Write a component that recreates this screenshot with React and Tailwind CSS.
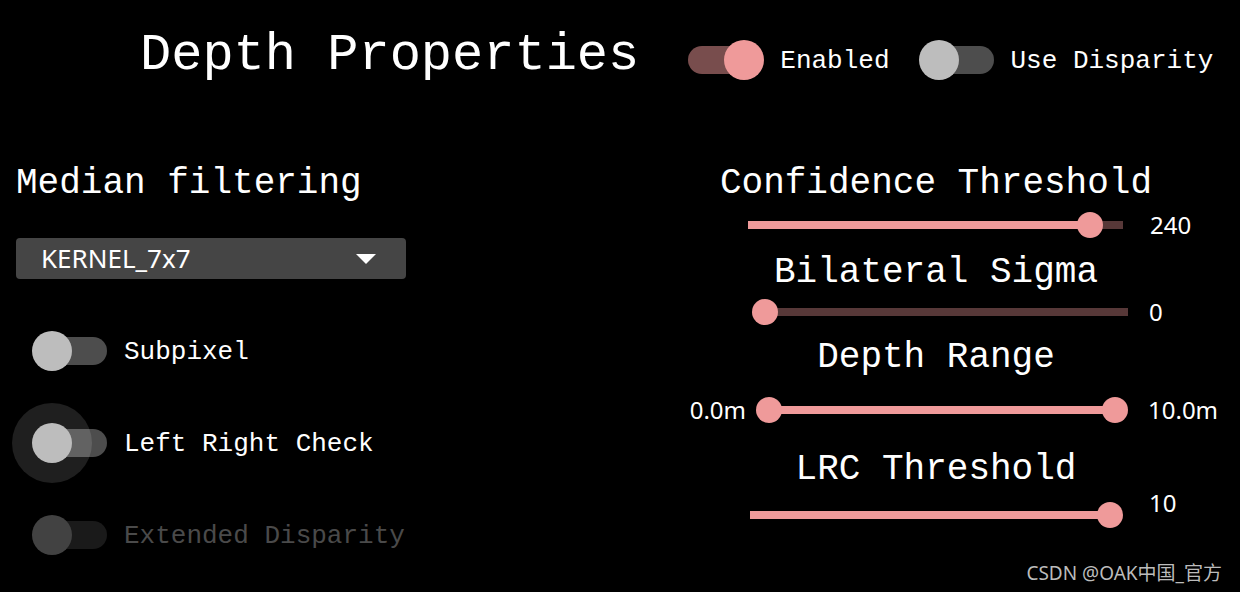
import React from 'react';

const mono = { fontFamily: '"Liberation Mono", "Courier New", monospace' };
const sans = { fontFamily: '"Noto Sans", Roboto, sans-serif' };

function Toggle({ checked = false, disabled = false, focused = false }) {
  let track = 'bg-white/30';
  let thumb = 'bg-[#bdbdbd]';
  if (checked) {
    track = 'bg-[#ef9a9a]/50';
    thumb = 'bg-[#ef9a9a]';
  }
  if (disabled) {
    track = 'bg-white/10';
    thumb = 'bg-[#424242]';
  }
  return (
    <div className="relative h-[40px] w-[76px] shrink-0">
      {focused && (
        <span className="absolute left-[-20px] top-[-20px] h-[80px] w-[80px] rounded-full bg-white/[0.12]" />
      )}
      <span className={`absolute left-[7px] top-[6px] h-[28px] w-[68px] rounded-full ${track}`} />
      <span
        className={`absolute top-0 h-[40px] w-[40px] rounded-full ${thumb} ${checked ? 'left-[43px]' : 'left-0'}`}
      />
    </div>
  );
}

function SwitchLabel({ label, checked, disabled, focused, className = '' }) {
  return (
    <div className={`flex h-[40px] items-center ${className}`}>
      <Toggle checked={checked} disabled={disabled} focused={focused} />
      <span
        className={`h-[40px] text-[26px] leading-[42px] ${checked ? 'ml-[23px]' : 'ml-[16px]'} ${
          disabled ? 'text-[#4a4a4a]' : 'text-white'
        }`}
        style={mono}
      >
        {label}
      </span>
    </div>
  );
}

function Slider({ className, from = 0, to, range = false }) {
  return (
    <div className={`relative h-[26px] shrink-0 ${className}`}>
      <div className="absolute inset-x-0 top-[9px] h-[8px] bg-[#573838]" />
      <div
        className="absolute top-[9px] h-[8px] bg-[#ef9a9a]"
        style={{ left: `${from}%`, width: `${to - from}%` }}
      />
      {range && (
        <span
          className="absolute top-0 ml-[-13px] h-[26px] w-[26px] rounded-full bg-[#ef9a9a]"
          style={{ left: `${from}%` }}
        />
      )}
      <span
        className="absolute top-0 ml-[-13px] h-[26px] w-[26px] rounded-full bg-[#ef9a9a]"
        style={{ left: `${to}%` }}
      />
    </div>
  );
}

function Heading({ children, className = '' }) {
  return (
    <div className={`h-[40px] text-[36px] leading-[47px] text-white whitespace-nowrap ${className}`} style={mono}>
      {children}
    </div>
  );
}

export default function App() {
  return (
    <div className="relative h-[592px] w-[1240px] overflow-hidden bg-black text-white">
      {/* header */}
      <div className="flex items-start pl-[140px] pt-[24px]">
        <h1 className="h-[60px] text-[52px] leading-[63px] whitespace-nowrap" style={mono}>
          Depth Properties
        </h1>
        <div className="ml-[42px] mt-[16px] flex items-center">
          <SwitchLabel label="Enabled" checked />
          <SwitchLabel label="Use Disparity" className="ml-[29px]" />
        </div>
      </div>

      <div className="mt-[76px] flex">
        {/* left column */}
        <div className="w-[680px] pl-[16px]">
          <Heading>Median filtering</Heading>
          <div className="mt-[38px] flex h-[41px] w-[390px] items-center justify-between rounded-[4px] bg-[#454545] pl-[25px] pr-[30px]">
            <span className="text-[26px] leading-[41px] text-white" style={sans}>
              KERNEL_7x7
            </span>
            <svg width="20" height="10" viewBox="0 0 20 10">
              <path d="M0 0 L20 0 L10 10 Z" fill="#fff" />
            </svg>
          </div>
          <div className="ml-[16px] mt-[52px] flex flex-col gap-[52px]">
            <SwitchLabel label="Subpixel" />
            <SwitchLabel label="Left Right Check" focused />
            <SwitchLabel label="Extended Disparity" disabled />
          </div>
        </div>

        {/* right column */}
        <div className="flex w-[560px] flex-col">
          <Heading className="w-[512px] text-center">Confidence Threshold</Heading>
          <div className="mt-[12px] flex items-center">
            <Slider className="ml-[68px] w-[375px]" to={91.2} />
            <span className="ml-[27px] text-[24px] leading-[26px]" style={sans}>240</span>
          </div>

          <Heading className="mt-[11px] w-[512px] text-center">Bilateral Sigma</Heading>
          <div className="mt-[10px] flex items-center">
            <Slider className="ml-[85px] w-[363px]" to={0} />
            <span className="ml-[21px] text-[24px] leading-[26px]" style={sans}>0</span>
          </div>

          <Heading className="mt-[9px] w-[512px] text-center">Depth Range</Heading>
          <div className="mt-[23px] flex items-center">
            <span className="w-[89px] pr-[23px] text-right text-[24px] leading-[26px]" style={sans}>0.0m</span>
            <Slider className="w-[346px]" from={0} to={100} range />
            <span className="ml-[33px] text-[24px] leading-[26px]" style={sans}>10.0m</span>
          </div>

          <Heading className="mt-[23px] w-[512px] text-center">LRC Threshold</Heading>
          <div className="mt-[16px] flex items-start">
            <Slider className="ml-[70px] w-[360px]" to={100} />
            <span className="ml-[39px] mt-[-12px] text-[24px] leading-[26px]" style={sans}>10</span>
          </div>
        </div>
      </div>

      {/* watermark */}
      <div
        className="absolute bottom-[5px] right-[18px] text-[19px] text-[#bcbcbc]"
        style={{ fontFamily: '"Noto Sans", "Noto Sans CJK SC", sans-serif' }}
      >
        CSDN @OAK中国_官方
      </div>
    </div>
  );
}
